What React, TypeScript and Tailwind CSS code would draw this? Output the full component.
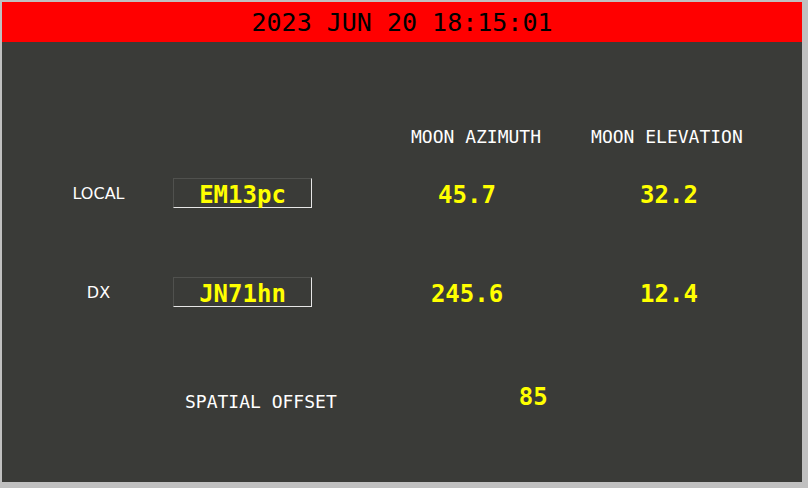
import React from "react";

const mono = "font-['DejaVu_Sans_Mono','Liberation_Mono',monospace]";

function GridBox({ value }: { value: string }) {
  return (
    <div className="w-[139px] h-[30px] flex items-center justify-center border-t border-l border-b border-r border-t-[#50514e] border-l-[#50514e] border-b-[#e6e6e6] border-r-[#e6e6e6]">
      <span className={`${mono} pt-[3px] text-[24px] leading-none font-bold text-[#ffff00]`}>
        {value}
      </span>
    </div>
  );
}

function Value({ children, w }: { children: React.ReactNode; w: string }) {
  return (
    <div className={`${w} pt-[3px] text-center ${mono} text-[24px] leading-none font-bold text-[#ffff00]`}>
      {children}
    </div>
  );
}

function Row({ label, grid, az, el }: { label: string; grid: string; az: string; el: string }) {
  return (
    <div className="flex items-center h-[30px]">
      <div className="w-[149px] ml-[22px] pt-[1px] text-center font-['DejaVu_Sans',sans-serif] text-[16px] leading-none text-white">
        {label}
      </div>
      <GridBox value={grid} />
      <div className="w-[94px]" />
      <Value w="w-[122px]">{az}</Value>
      <div className="w-[80px]" />
      <Value w="w-[122px]">{el}</Value>
    </div>
  );
}

export default function App() {
  return (
    <div className="w-[808px] h-[488px] bg-[#c0c0c0] pl-[2px] pt-[2px]">
      <div className="w-[800px] h-[480px] bg-[#3a3b38] flex flex-col">
        <div className={`h-[40px] bg-[#ff0000] flex items-center justify-center ${mono} text-[25px] leading-none text-black`}>
          2023 JUN 20 18:15:01
        </div>

        <div className={`mt-[83px] h-[24px] flex items-center ${mono} text-[18px] leading-none text-white`}>
          <span className="ml-[409px]">MOON AZIMUTH</span>
          <span className="ml-[50px]">MOON ELEVATION</span>
        </div>

        <div className="mt-[29px]">
          <Row label="LOCAL" grid="EM13pc" az="45.7" el="32.2" />
        </div>
        <div className="mt-[69px]">
          <Row label="DX" grid="JN71hn" az="245.6" el="12.4" />
        </div>

        <div className="mt-[73px] flex items-start h-[30px]">
          <span className={`ml-[183px] mt-[13px] ${mono} text-[18px] leading-none text-white`}>
            SPATIAL OFFSET
          </span>
          <span className={`ml-[182px] mt-[5px] ${mono} text-[24px] leading-none font-bold text-[#ffff00]`}>
            85
          </span>
        </div>
      </div>
    </div>
  );
}
